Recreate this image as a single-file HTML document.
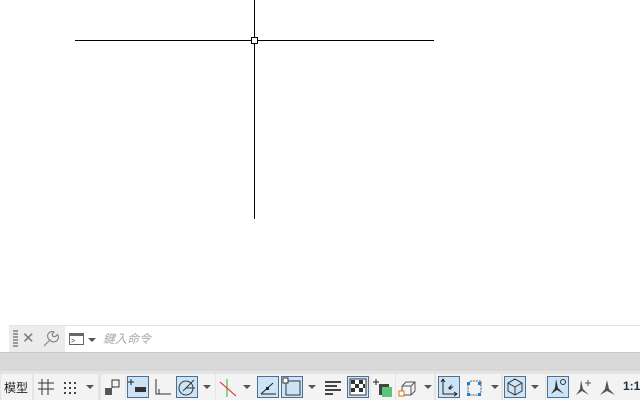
<!DOCTYPE html>
<html><head><meta charset="utf-8"><style>
*{margin:0;padding:0;box-sizing:border-box}
body{width:640px;height:400px;background:#fff;position:relative;overflow:hidden;font-family:"Liberation Sans","Noto Sans CJK TC",sans-serif}
.a{position:absolute}
.g{position:absolute;top:374px;height:26px;background:#f3f3f3}
.b{position:absolute;top:376px;width:22px;height:22px}
.on{background:#cde4f7;border:1px solid #4d6f95}
svg{position:absolute;left:0;top:0}
.ar{position:absolute;top:385px;width:0;height:0;border-left:4px solid transparent;border-right:4px solid transparent;border-top:4px solid #555}
</style></head><body>
<div class="a" style="left:75px;top:40px;width:359px;height:1px;background:#000"></div>
<div class="a" style="left:254px;top:0;width:1px;height:219px;background:#000"></div>
<div class="a" style="left:251px;top:37px;width:7px;height:7px;border:1px solid #000;background:#fff"></div>

<div class="a" style="left:9px;top:325px;width:631px;height:1px;background:#e3e3e3"></div>
<div class="a" style="left:9px;top:326px;width:56px;height:26px;background:#ececec"></div>
<div class="a" style="left:13px;top:330px;width:5px;height:18px;background:repeating-linear-gradient(#999 0 2px,transparent 2px 3px);"></div>
<div class="a" style="left:22px;top:329px;font-size:15px;color:#777">✕</div>
<svg class="a" style="left:42px;top:330px" width="18" height="18" viewBox="0 0 18 18"><path d="M2 16 L8 10 M8 10 a4 4 0 0 1 4-8 l-2 2.5 1 2 2.5 0 2-2 a4 4 0 0 1 -7.5 5.5" stroke="#888" fill="none" stroke-width="1.2"/></svg>
<div class="a" style="left:69px;top:333px;width:15px;height:12px;border:1px solid #666;border-top:3px solid #666"></div>
<div class="a" style="left:71px;top:338px;font-size:7px;color:#444">&gt;_</div>
<div class="ar" style="left:88px;top:338px"></div>
<div class="a" style="left:103px;top:330px;font-size:12px;color:#aaa;font-style:italic">鍵入命令</div>
<div class="a" style="left:0;top:352px;width:640px;height:22px;background:#d9d9d9;border-top:1px solid #c8c8c8"></div>
<div class="a" style="left:0;top:371px;width:640px;height:29px;background:#e4e4e4"></div>

<div class="g" style="left:1px;width:31px"></div>
<div class="a" style="left:4px;top:379px;font-size:12px;color:#222">模型</div>
<div class="g" style="left:34px;width:64px"></div>
<svg class="a" style="left:37px;top:378px" width="18" height="18"><path d="M5 1V17M11 1V17M1 5H17M1 11H17" stroke="#333"/></svg>
<svg class="a" style="left:62px;top:380px" width="16" height="16"><g fill="#444"><rect x="2" y="2" width="2" height="2"/><rect x="7" y="2" width="2" height="2"/><rect x="12" y="2" width="2" height="2"/><rect x="2" y="7" width="2" height="2"/><rect x="7" y="7" width="2" height="2"/><rect x="12" y="7" width="2" height="2"/><rect x="2" y="12" width="2" height="2"/><rect x="7" y="12" width="2" height="2"/><rect x="12" y="12" width="2" height="2"/></g></svg>
<div class="ar" style="left:86px"></div>
<div class="g" style="left:101px;width:24px"></div>
<svg class="a" style="left:104px;top:378px" width="18" height="18"><rect x="1" y="10" width="7" height="7" fill="#555"/><path d="M8 10V2H15V9H8" stroke="#333" fill="none"/></svg>
<div class="g" style="left:126px;width:25px"></div>
<div class="b on" style="left:127px"><svg width="20" height="20"><path d="M3 2V8M0 5H6" stroke="#222"/><rect x="7" y="10" width="11" height="5" fill="#333"/></svg></div>
<div class="g" style="left:151px;width:24px"></div>
<svg class="a" style="left:154px;top:378px" width="18" height="18"><path d="M2 1V16H17M5 11V16" stroke="#333" fill="none"/></svg>
<div class="g" style="left:175px;width:40px"></div>
<div class="b on" style="left:176px"><svg width="20" height="20"><circle cx="9" cy="11" r="7" stroke="#333" fill="none"/><path d="M6 14L17 3M9 11H18" stroke="#333"/></svg></div>
<div class="ar" style="left:203px"></div>
<div class="g" style="left:216px;width:40px"></div>
<svg class="a" style="left:218px;top:378px" width="20" height="20"><path d="M9 1V19" stroke="#3a3"/><path d="M2 4L18 18" stroke="#d22"/></svg>
<div class="ar" style="left:243px"></div>
<div class="g" style="left:256px;width:64px"></div>
<div class="b on" style="left:257px"><svg width="20" height="20"><path d="M3 17H18M3 17L15 6" stroke="#222"/><rect x="8" y="10" width="3" height="3" fill="#222"/></svg></div>
<div class="b on" style="left:281px"><svg width="20" height="20"><rect x="4" y="4" width="14" height="14" stroke="#333" fill="none"/><rect x="1" y="1" width="5" height="5" fill="#fff" stroke="#333"/></svg></div>
<div class="ar" style="left:308px"></div>

<div class="g" style="left:320px;width:25px"></div>
<svg class="a" style="left:323px;top:378px" width="20" height="20"><path d="M2 4H18M2 8H14M2 12H18M2 16H10" stroke="#444" stroke-width="2"/></svg>
<div class="g" style="left:345px;width:25px"></div>
<div class="b on" style="left:347px"><svg width="20" height="20"><rect x="2" y="2" width="16" height="16" fill="#fff" stroke="#333"/><path d="M3 3h4v4H3zM11 3h4v4h-4zM7 7h4v4H7zM3 11h4v4H3zM11 11h4v4h-4zM15 7h2v4h-2z" fill="#333"/></svg></div>
<div class="g" style="left:371px;width:24px"></div>
<svg class="a" style="left:373px;top:378px" width="20" height="20"><path d="M3 1V7M0 4H6" stroke="#222"/><rect x="6" y="6" width="10" height="11" fill="#444"/><rect x="9" y="9" width="10" height="10" fill="#5cc57a"/></svg>
<div class="g" style="left:396px;width:38px"></div>
<svg class="a" style="left:398px;top:378px" width="20" height="20"><path d="M4 8L8 4H17V13L13 17M4 8H13V17H4V8M13 8L17 4" stroke="#555" fill="none"/><rect x="1" y="13" width="5" height="5" fill="#fff" stroke="#e67000"/></svg>
<div class="ar" style="left:424px"></div>

<div class="g" style="left:436px;width:27px"></div>
<div class="b on" style="left:438px"><svg width="20" height="20"><path d="M4 2V17H18M2 5L4 2 6 5M15 15L18 17 15 19" stroke="#222" fill="none"/><path d="M9 11L13 7 12 10 15 9 11 13" fill="#333"/></svg></div>
<div class="g" style="left:463px;width:38px"></div>
<svg class="a" style="left:465px;top:378px" width="20" height="20"><path d="M3 6L6 3H16V14L13 17H3Z" stroke="#555" fill="none" stroke-dasharray="2 1"/><rect x="2" y="4" width="3" height="3" fill="#1a7fd4"/><rect x="13" y="4" width="3" height="3" fill="#1a7fd4"/><rect x="2" y="15" width="3" height="3" fill="#1a7fd4"/><rect x="13" y="15" width="3" height="3" fill="#1a7fd4"/></svg>
<div class="ar" style="left:491px"></div>
<div class="g" style="left:503px;width:42px"></div>
<div class="b on" style="left:504px"><svg width="20" height="20"><path d="M10 2L17 6V14L10 18 3 14V6Z M10 10V18M10 10L3 6M10 10L17 6" stroke="#333" fill="none"/></svg></div>
<div class="ar" style="left:531px"></div>

<div class="g" style="left:546px;width:94px"></div>
<div class="b on" style="left:547px"><svg width="20" height="20"><path d="M8 2L10 11 16 17 9 13 3 17 7 11Z" fill="#333"/><circle cx="15" cy="5" r="2.5" stroke="#333" fill="none"/></svg></div>
<svg class="a" style="left:573px;top:378px" width="20" height="20"><path d="M8 2L10 11 16 17 9 13 3 17 7 11Z" fill="#555"/><path d="M15 2V8M12 5H18" stroke="#555"/></svg>
<svg class="a" style="left:597px;top:378px" width="20" height="20"><path d="M10 2L12 11 18 17 10 13 3 17 8 11Z" fill="#555"/></svg>
<div class="a" style="left:623px;top:379px;font-size:12px;font-weight:bold;color:#234">1:1</div>
</body></html>
